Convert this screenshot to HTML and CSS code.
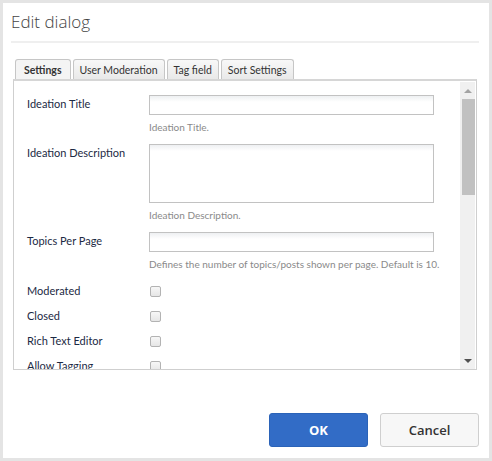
FILE: index.html
```html
<!DOCTYPE html>
<html lang="en">
  <head>
    <meta charset="UTF-8" />
    <meta name="viewport" content="width=device-width, initial-scale=1.0" />
    <title>Edit dialog</title>
    <link rel="stylesheet" href="styles.css">
  </head>
  <body>
    <div class="dialog">
      <div class="dialog_head">
        <h1 class="dialog_title">Edit dialog</h1>
      </div>

      <div class="dialog_body">
        <ul class="tabs">
          <li class="tab -on">Settings</li>
          <li class="tab">User Moderation</li>
          <li class="tab">Tag field</li>
          <li class="tab">Sort Settings</li>
        </ul>

        <div class="tab_panel">
          <div class="panel_scroll">
            <div class="field">
              <label class="field_label">Ideation Title</label>
              <div class="field_ctl">
                <input type="text" class="text_input" />
                <div class="field_help">Ideation Title.</div>
              </div>
            </div>
            <div class="field">
              <label class="field_label">Ideation Description</label>
              <div class="field_ctl">
                <textarea class="text_input -area"></textarea>
                <div class="field_help">Ideation Description.</div>
              </div>
            </div>
            <div class="field">
              <label class="field_label">Topics Per Page</label>
              <div class="field_ctl">
                <input type="text" class="text_input" />
                <div class="field_help">Defines the number of topics/posts shown per page. Default is 10.</div>
              </div>
            </div>
            <div class="field -check">
              <label class="field_label">Moderated</label>
              <div class="field_ctl"><span class="checkbox"></span></div>
            </div>
            <div class="field -check">
              <label class="field_label">Closed</label>
              <div class="field_ctl"><span class="checkbox"></span></div>
            </div>
            <div class="field -check">
              <label class="field_label">Rich Text Editor</label>
              <div class="field_ctl"><span class="checkbox"></span></div>
            </div>
            <div class="field -check">
              <label class="field_label">Allow Tagging</label>
              <div class="field_ctl"><span class="checkbox"></span></div>
            </div>
          </div>

          <!-- 假的捲軸 -->
          <div class="scrollbar">
            <span class="sb_btn -up"></span>
            <span class="sb_thumb"></span>
            <span class="sb_track"></span>
            <span class="sb_btn -down"></span>
          </div>
        </div>
      </div>

      <div class="dialog_foot">
        <button class="btn -ok">OK</button>
        <button class="btn -cancel">Cancel</button>
      </div>
    </div>
  </body>
</html>
```

FILE: styles.css
```css
* {
  box-sizing: border-box;
}
body {
  margin: 0;
  font-family: Lato, "Open Sans", sans-serif;
  background: #fff;
}
div.dialog {
  width: 492px;
  height: 461px;
  border: 3px solid #e4e4e4;
  display: flex;
  flex-direction: column;
  background: #fff;
}
div.dialog_head {
  margin: 0 10px 0 8px;
  padding: 9px 0 10px;
  border-bottom: 2px solid #efefef;
}
h1.dialog_title {
  margin: 0;
  font-family: "Open Sans", sans-serif;
  font-weight: 300;
  font-size: 17px;
  line-height: 19px;
  color: #444;
}
div.dialog_body {
  padding: 16px 12px 0 10px;
}
ul.tabs {
  list-style: none;
  margin: 0;
  padding: 0 0 0 2px;
  display: flex;
  gap: 2px;
  height: 20px;
}
li.tab {
  height: 20px;
  padding: 0 6px;
  border: 1px solid #c6c6c6;
  border-bottom: 0;
  border-radius: 3px 3px 0 0;
  background: linear-gradient(#f8f8f8, #e9e9e9);
  font-size: 10.5px;
  line-height: 20px;
  color: #333;
}
li.tab.-on {
  background: #f4f4f4;
  font-weight: bold;
  padding: 0 8px;
}
div.tab_panel {
  height: 291px;
  border: 1px solid #cfcfcf;
  border-top: 2px solid #d6d6d6;
  padding: 1px 1px 0 0;
  display: flex;
}
div.panel_scroll {
  flex-grow: 1;
  overflow: hidden;
  padding: 13px 0 0 13px;
}
div.field {
  display: flex;
  margin-bottom: 11px;
}
div.field.-check {
  margin-bottom: 14px;
  height: 11px;
}
div.field.-check:nth-child(4) {
  margin-top: 16px;
}
label.field_label {
  flex-basis: 122px;
  flex-shrink: 0;
  font-size: 11px;
  line-height: 14px;
  padding-top: 2px;
  color: #1c2a44;
}
div.field.-check label.field_label {
  padding-top: 0;
  margin-top: -2px;
}
input.text_input,
textarea.text_input {
  display: block;
  width: 285px;
  height: 20px;
  margin: 0;
  border: 1px solid #c2c2c2;
  background: linear-gradient(#eef0f2, #fff 6px);
  resize: none;
  font: inherit;
}
textarea.text_input.-area {
  height: 59px;
}
div.field_help {
  margin-top: 6px;
  font-size: 10px;
  line-height: 12px;
  color: #8a8a8a;
}
div.field:nth-child(3) {
  margin-bottom: 0;
}
span.checkbox {
  display: block;
  width: 11px;
  height: 11px;
  margin-left: 1px;
  border: 1px solid #b3b3b3;
  border-radius: 2px;
  background: linear-gradient(#f7f7f7, #e6e6e6);
}
div.scrollbar {
  width: 15px;
  flex-shrink: 0;
  display: flex;
  flex-direction: column;
  background: #f0f0f0;
}
span.sb_btn {
  height: 17px;
  display: flex;
  align-items: center;
  justify-content: center;
}
span.sb_btn::before {
  content: "";
  border-left: 4px solid transparent;
  border-right: 4px solid transparent;
}
span.sb_btn.-up::before {
  border-bottom: 4px solid #a3a3a3;
}
span.sb_btn.-down::before {
  border-top: 4px solid #505050;
}
span.sb_thumb {
  height: 96px;
  margin: 0 0 0 2px;
  background: #c1c1c1;
}
span.sb_track {
  flex-grow: 1;
}
div.dialog_foot {
  margin-top: auto;
  padding: 0 10px 11px 0;
  display: flex;
  justify-content: flex-end;
  gap: 12px;
}
button.btn {
  width: 99px;
  height: 34px;
  border-radius: 3px;
  font-family: "Open Sans", sans-serif;
  font-size: 13px;
  font-weight: 600;
  cursor: pointer;
}
button.btn.-ok {
  border: 1px solid #2b63b8;
  background: #326cc6;
  color: #fff;
  font-weight: bold;
}
button.btn.-cancel {
  border: 1px solid #cfcfcf;
  background: #f7f7f7;
  color: #333;
}
```
